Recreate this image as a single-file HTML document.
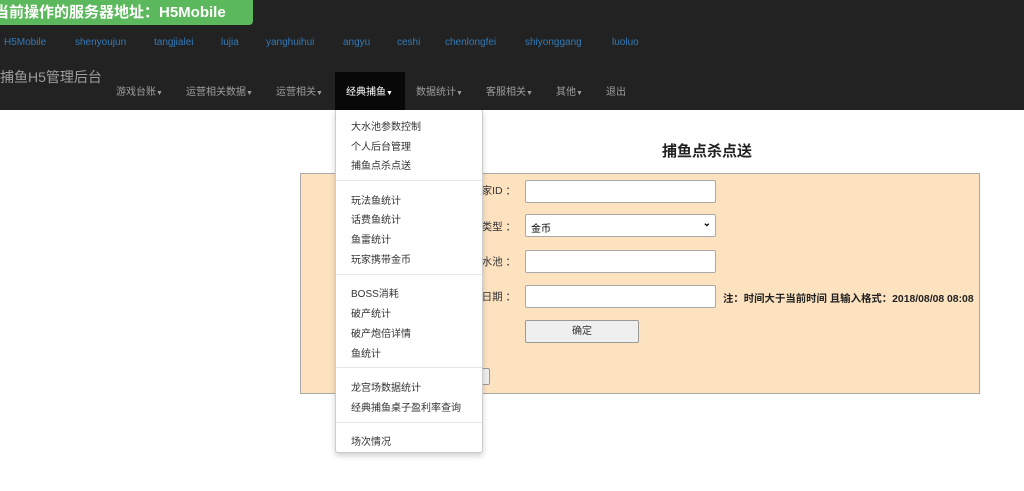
<!DOCTYPE html>
<html><head><meta charset="utf-8"><style>
*{margin:0;padding:0;box-sizing:border-box}
body{width:1024px;height:491px;overflow:hidden;background:#fff;font-family:"Liberation Sans","Noto Sans CJK SC",sans-serif;position:relative;font-size:10px}
.top{position:absolute;left:0;top:0;width:1024px;height:110px;background:#222}
.badge{position:absolute;left:0;top:0;width:253px;height:25px;background:#5cb85c;border-radius:0 0 4px 0;color:#fff;font-weight:bold;font-size:15px;line-height:25px;white-space:nowrap;overflow:hidden}
.badge span{position:absolute;left:-6px}
.srv{position:absolute;top:37px;color:#337ab7;font-size:10px;white-space:nowrap}
.brand{position:absolute;left:0;top:67px;color:#9d9d9d;font-size:14px;white-space:nowrap}
.nav{position:absolute;top:83px;color:#9d9d9d;font-size:10px;white-space:nowrap}
.nav b{font-weight:normal;font-size:7px}
.act{position:absolute;left:335px;top:72px;width:70px;height:38px;background:#080808}
.menu{position:absolute;left:335px;top:110px;width:148px;height:343px;background:#fff;border:1px solid #ccc;border-top:none;box-shadow:0 3px 6px rgba(0,0,0,.18);border-radius:0 0 3px 3px}
.mi{position:absolute;left:15px;color:#333;font-size:10px;white-space:nowrap}
.dv{position:absolute;left:0;width:146px;height:1px;background:#e5e5e5}
.box{position:absolute;left:300px;top:173px;width:680px;height:221px;background:#fde2c0;border:1px solid #aaa}
.lbl{position:absolute;right:508px;color:#333;font-size:10.5px;white-space:nowrap}
.inp{position:absolute;left:525px;width:191px;height:23px;background:#fff;border:1px solid #a9a9a9;border-radius:2px}
</style></head><body>
<div class="top"></div>
<div class="badge"><span>当前操作的服务器地址：H5Mobile</span></div>
<div class="srv" style="left:4px">H5Mobile</div>
<div class="srv" style="left:75px">shenyoujun</div>
<div class="srv" style="left:154px">tangjialei</div>
<div class="srv" style="left:221px">lujia</div>
<div class="srv" style="left:266px">yanghuihui</div>
<div class="srv" style="left:343px">angyu</div>
<div class="srv" style="left:397px">ceshi</div>
<div class="srv" style="left:445px">chenlongfei</div>
<div class="srv" style="left:525px">shiyonggang</div>
<div class="srv" style="left:612px">luoluo</div>
<div class="brand">捕鱼H5管理后台</div>
<div class="act"></div>
<div class="nav" style="left:116px">游戏台账<b>▼</b></div>
<div class="nav" style="left:186px">运营相关数据<b>▼</b></div>
<div class="nav" style="left:276px">运营相关<b>▼</b></div>
<div class="nav" style="left:346px;color:#fff">经典捕鱼<b>▼</b></div>
<div class="nav" style="left:416px">数据统计<b>▼</b></div>
<div class="nav" style="left:486px">客服相关<b>▼</b></div>
<div class="nav" style="left:556px">其他<b>▼</b></div>
<div class="nav" style="left:606px">退出</div>

<div style="position:absolute;left:662px;top:140px;font-size:15px;font-weight:bold;color:#222">捕鱼点杀点送</div>
<div class="box"></div>
<div class="lbl" style="top:183px">玩家ID ：</div>
<div class="inp" style="top:180px"></div>
<div class="lbl" style="top:219px">类型 ：</div>
<div class="inp" style="top:214px;height:23px"><span style="position:absolute;left:5px;top:5px;font-size:10px;color:#000">金币</span><span style="position:absolute;right:4px;top:3px;font-size:10px;font-weight:bold">⌄</span></div>
<div class="lbl" style="top:254px">水池 ：</div>
<div class="inp" style="top:250px"></div>
<div class="lbl" style="top:289px">日期 ：</div>
<div class="inp" style="top:285px"></div>
<div style="position:absolute;left:723px;top:290px;font-weight:bold;color:#222;font-size:10.4px;white-space:nowrap">注：时间大于当前时间 且输入格式：2018/08/08 08:08</div>
<div style="position:absolute;left:525px;top:320px;width:114px;height:23px;background:#efefef;border:1px solid #999;border-radius:2px;text-align:center;line-height:21px;color:#333;font-size:10px">确定</div>
<div style="position:absolute;left:470px;top:368px;width:20px;height:17px;background:#efefef;border:1px solid #999;border-radius:2px"></div>

<div class="menu">
<div class="mi" style="top:8px">大水池参数控制</div>
<div class="mi" style="top:28px">个人后台管理</div>
<div class="mi" style="top:47px">捕鱼点杀点送</div>
<div class="dv" style="top:70px"></div>
<div class="mi" style="top:82px">玩法鱼统计</div>
<div class="mi" style="top:101px">话费鱼统计</div>
<div class="mi" style="top:121px">鱼雷统计</div>
<div class="mi" style="top:141px">玩家携带金币</div>
<div class="dv" style="top:164px"></div>
<div class="mi" style="top:175px">BOSS消耗</div>
<div class="mi" style="top:195px">破产统计</div>
<div class="mi" style="top:215px">破产炮倍详情</div>
<div class="mi" style="top:235px">鱼统计</div>
<div class="dv" style="top:257px"></div>
<div class="mi" style="top:269px">龙宫场数据统计</div>
<div class="mi" style="top:289px">经典捕鱼桌子盈利率查询</div>
<div class="dv" style="top:312px"></div>
<div class="mi" style="top:323px">场次情况</div>
</div>
</body></html>
